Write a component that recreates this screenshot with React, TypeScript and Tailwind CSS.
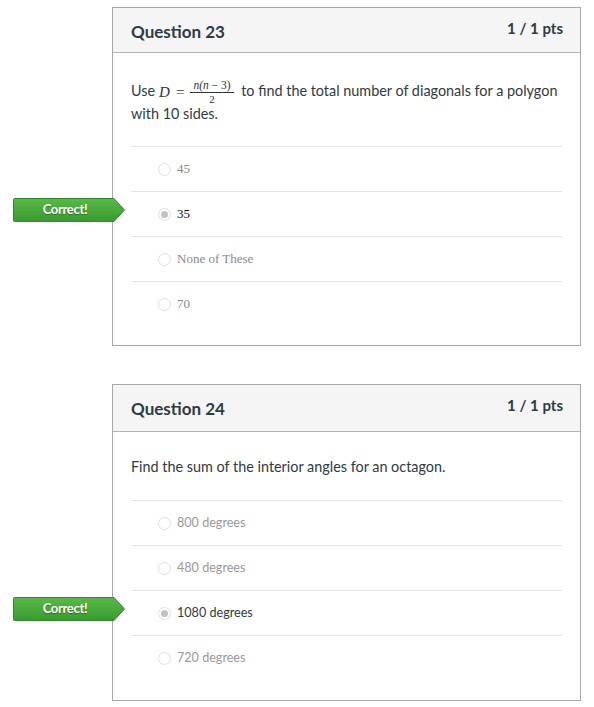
import React from "react";

type Option = { label: string; selected?: boolean };

function Radio({ selected }: { selected?: boolean }) {
  return (
    <span className="relative inline-block h-[13px] w-[13px] shrink-0 rounded-full border border-[#e0e0e0] bg-white">
      {selected && <span className="absolute left-[2px] top-[2px] h-[7px] w-[7px] rounded-full bg-[#c2c2c2]" />}
    </span>
  );
}

function CorrectBadge() {
  return (
    <div className="absolute left-[-118px] top-1/2 -mt-[16px] h-[24px] w-[113px]">
      <svg width="113" height="24" viewBox="0 0 113 24" className="absolute inset-0">
        <defs>
          <linearGradient id="cg" x1="0" y1="0" x2="0" y2="1">
            <stop offset="0" stopColor="#58b947" />
            <stop offset="1" stopColor="#3a9a31" />
          </linearGradient>
        </defs>
        <path d="M1.5 0.5H101L111.5 12L101 23.5H1.5a1 1 0 0 1-1-1V1.5a1 1 0 0 1 1-1Z" fill="url(#cg)" stroke="#2f8a28" />
      </svg>
      <span className="relative block w-[104px] pt-[1px] text-center text-[13px] font-bold leading-[20px] tracking-[-0.3px] text-white [text-shadow:0_1px_1px_rgba(0,0,0,0.35)]">
        Correct!
      </span>
    </div>
  );
}

function Question({
  title,
  prompt,
  options,
  serif,
  tall,
}: {
  title: string;
  prompt: React.ReactNode;
  options: Option[];
  serif?: boolean;
  tall?: boolean;
}) {
  return (
    <div className="w-[469px] border border-[#a8a8a8] bg-white">
      <div
        className={`flex items-start justify-between border-b border-[#b4b4b4] bg-[#f5f5f5] pl-[18px] pr-[17px] ${
          tall ? "h-[47px]" : "h-[45px]"
        }`}
      >
        <h2 className="pt-[12px] text-[17px] font-bold leading-[24px] text-[#2d3b45]">{title}</h2>
        <span className="pt-[10px] text-[15px] font-bold leading-[20px] text-[#2d3b45]">1 / 1 pts</span>
      </div>
      <div className={`px-[18px] ${tall ? "pt-[23px] pb-[20px]" : "pt-[26px] pb-[19px]"}`}>
        <div className={`text-[14.4px] leading-[23px] text-[#2d3b45] ${tall ? "pb-[22px]" : "pb-[21px]"}`}>{prompt}</div>
        {options.map((o) => (
          <div key={o.label} className="relative flex h-[45px] items-center border-t border-[#e4e4e4] pl-[27px]">
            {o.selected && <CorrectBadge />}
            <Radio selected={o.selected} />
            <span
              className={
                serif
                  ? `ml-[6px] font-['Liberation_Serif',serif] text-[13px] ${o.selected ? "text-[#111]" : "text-[#8a8a8a]"}`
                  : `ml-[6px] text-[12.6px] ${o.selected ? "text-[#2d3b45]" : "text-[#999]"}`
              }
            >
              {o.label}
            </span>
          </div>
        ))}
      </div>
    </div>
  );
}

function Formula() {
  return (
    <span className="mx-[4px] -my-[6px] inline-flex items-center align-middle font-['Liberation_Serif',serif] italic leading-none text-[#333]">
      <span className="text-[15px]">D</span>
      <span className="mx-[6px] not-italic text-[15px]">=</span>
      <span className="inline-flex flex-col items-center">
        <span className="border-b border-[#333] px-[3px] pb-[1px] text-[11.5px]">
          n(n <span className="not-italic">− 3)</span>
        </span>
        <span className="pt-[1px] text-[11px] not-italic">2</span>
      </span>
    </span>
  );
}

export default function App() {
  return (
    <div className="min-h-screen bg-white pt-[7px] pl-[112px] font-['Lato','Open_Sans',sans-serif]">
      <Question
        title="Question 23"
        serif
        prompt={
          <>
            Use
            <Formula /> to find the total number of diagonals for a polygon with 10 sides.
          </>
        }
        options={[{ label: "45" }, { label: "35", selected: true }, { label: "None of These" }, { label: "70" }]}
      />
      <div className="h-[38px]" />
      <Question
        title="Question 24"
        tall
        prompt="Find the sum of the interior angles for an octagon."
        options={[
          { label: "800 degrees" },
          { label: "480 degrees" },
          { label: "1080 degrees", selected: true },
          { label: "720 degrees" },
        ]}
      />
    </div>
  );
}
